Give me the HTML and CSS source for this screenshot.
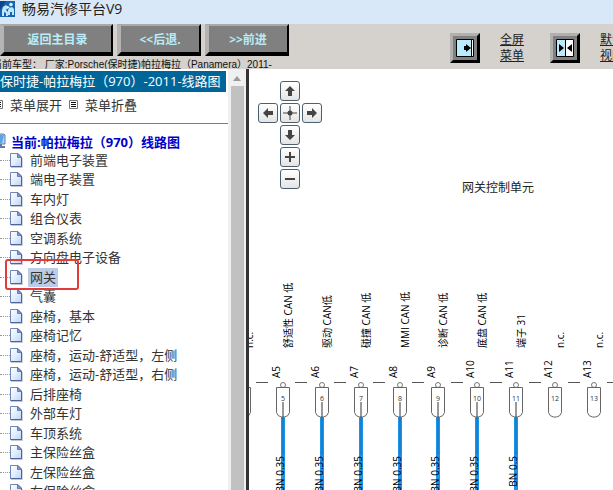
FILE: index.html
```html
<!doctype html>
<html lang="zh-CN">

<head>
  <meta charset="UTF-8" />
  <meta name="viewport" content="width=device-width, initial-scale=1.0" />
  <title>畅易汽修平台V9</title>
  <link rel="stylesheet" href="styles.css">
</head>

<body>
  <svg class="defs" aria-hidden="true">
    <defs>
      <linearGradient id="paper" x1="0" y1="0" x2="1" y2="1">
        <stop offset="0" stop-color="#ffffff" />
        <stop offset="0.5" stop-color="#e2eefd" />
        <stop offset="1" stop-color="#b9d4f6" />
      </linearGradient>
      <symbol id="page" viewBox="0 0 13 15">
        <path d="M1 14.2h11V5" fill="none" stroke="#c3c8d4" stroke-width="1.5" />
        <path d="M0.5 0.5h7.5l3.5 3.5v9.5h-11z" fill="url(#paper)" stroke="#7187b5" />
        <path d="M11.5 4v9.5h-11" fill="none" stroke="#4f6499" />
        <path d="M7.5 0.5v4h4z" fill="#8397c8" stroke="#566ca3" stroke-width="0.8" />
      </symbol>
      <symbol id="list" viewBox="0 0 9 9">
        <path d="M0.5 0.5h8v8h-8z" fill="#fff" stroke="#777" />
        <path d="M2 2.5h5M2 4.5h5M2 6.5h5" stroke="#111" />
      </symbol>
      <symbol id="socket" viewBox="0 0 16 36" overflow="visible">
        <circle cx="8" cy="3" r="2.5" fill="#fff" stroke="#555" stroke-width="0.8" />
        <path d="M1.5 5.5h13v25q-1 4-5 4.5h-3q-4-0.5-5-4.5z" fill="#fff" stroke="#666" />
      </symbol>
      <symbol id="wire" viewBox="0 0 8 400" overflow="visible">
        <path d="M4 31v369" stroke="#1a93e8" stroke-width="4" />
        <path d="M4 16v15" stroke="#333" stroke-width="1" />
        <path d="M4 31v38" stroke="#1670b8" stroke-width="1" />
      </symbol>
    </defs>
  </svg>

  <div class="app">
    <header class="titlebar">
      <svg class="logo" width="16" height="16" viewBox="0 0 16 16">
        <path d="M0 0h15v16H0z" fill="#1764ad" />
        <path d="M0 0h6l-6 9z" fill="#0d438d" />
        <path d="M3 6l3-2 2 2-2 3 2 2v4H6v-3l-2-1v4H2V9zM9 7l3-1 2 2v6h-2v-3h-2v3H8V9z" fill="#bfe5fa" />
        <circle cx="11" cy="3.5" r="1.8" fill="#d9f1fc" />
        <path d="M7 5l3 1-3 2z" fill="#fff" />
      </svg>
      <h1>畅易汽修平台V9</h1>
    </header>

    <div class="toolbar">
      <div class="toolbar-left">
        <div class="buttons">
          <button class="btn btn-wide">返回主目录</button>
          <button class="btn">&lt;&lt;后退.</button>
          <button class="btn">&gt;&gt;前进</button>
        </div>
        <p class="model">当前车型： 厂家:Porsche(保时捷)帕拉梅拉（Panamera）2011-</p>
      </div>
      <div class="tools">
        <button class="tool" aria-label="全屏菜单">
          <svg width="18" height="18" viewBox="0 0 18 18">
            <path d="M0.5 0.5h17v17h-17z" fill="#b9ecff" stroke="#000" />
            <path d="M15.5 1v16" stroke="#000" />
            <path d="M16 1h1v16h-1z" fill="#fff" />
            <path d="M8 7h2V5l5 4-5 4v-2H8z" fill="#000" />
          </svg>
        </button>
        <a class="tool-link" href="#">全屏菜单</a>
        <button class="tool" aria-label="默认视图">
          <svg width="18" height="18" viewBox="0 0 18 18">
            <path d="M0.5 0.5h17v17h-17z" fill="#fff" stroke="#000" />
            <path d="M1 1h8v16H1z" fill="#b9ecff" />
            <path d="M9.5 0v18" stroke="#000" />
            <path d="M3 5l5 4-5 4zM16 5l-5 4 5 4z" fill="#000" />
          </svg>
        </button>
        <a class="tool-link" href="#">默认视图</a>
      </div>
    </div>

    <main class="main">
      <aside class="side">
        <div class="side-content">
          <h2 class="side-title">保时捷-帕拉梅拉（970）-2011-线路图</h2>
          <div class="side-actions">
            <svg width="9" height="9"><use href="#list" /></svg>
            <a href="#">菜单展开</a>
            <svg width="9" height="9"><use href="#list" /></svg>
            <a href="#">菜单折叠</a>
          </div>
          <hr>
          <div class="current">
            <svg width="14" height="16" viewBox="0 0 14 16">
              <path d="M1 1h11l1 1v9H1z" fill="#b5d4f5" stroke="#5d7fb4" />
              <path d="M8 2l4 0-2 8H6z" fill="#5ca4e8" />
              <path d="M6 11h4v2h3v2H4v-2h2z" fill="#65799f" />
            </svg>
            <h3>当前:帕拉梅拉（970）线路图</h3>
          </div>
          <ul class="tree">
            <li><svg><use href="#page" /></svg><a href="#">前端电子装置</a></li>
            <li><svg><use href="#page" /></svg><a href="#">端电子装置</a></li>
            <li><svg><use href="#page" /></svg><a href="#">车内灯</a></li>
            <li><svg><use href="#page" /></svg><a href="#">组合仪表</a></li>
            <li><svg><use href="#page" /></svg><a href="#">空调系统</a></li>
            <li><svg><use href="#page" /></svg><a href="#">方向盘电子设备</a></li>
            <li class="marked"><svg><use href="#page" /></svg><a class="selected" href="#">网关</a></li>
            <li><svg><use href="#page" /></svg><a href="#">气囊</a></li>
            <li><svg><use href="#page" /></svg><a href="#">座椅，基本</a></li>
            <li><svg><use href="#page" /></svg><a href="#">座椅记忆</a></li>
            <li><svg><use href="#page" /></svg><a href="#">座椅，运动-舒适型，左侧</a></li>
            <li><svg><use href="#page" /></svg><a href="#">座椅，运动-舒适型，右侧</a></li>
            <li><svg><use href="#page" /></svg><a href="#">后排座椅</a></li>
            <li><svg><use href="#page" /></svg><a href="#">外部车灯</a></li>
            <li><svg><use href="#page" /></svg><a href="#">车顶系统</a></li>
            <li><svg><use href="#page" /></svg><a href="#">主保险丝盒</a></li>
            <li><svg><use href="#page" /></svg><a href="#">左保险丝盒</a></li>
            <li><svg><use href="#page" /></svg><a href="#">右保险丝盒</a></li>
          </ul>
        </div>
        <div class="scrollbar">
          <svg width="8" height="5" viewBox="0 0 8 5"><path d="M0 5l4-5 4 5z" fill="#9a9a9a" /></svg>
          <div class="thumb"></div>
        </div>
      </aside>

      <section class="diagram">
        <svg class="wiring">
          <text class="name" x="213" y="123">网关控制单元</text>

          <path d="M7 313.500h360" stroke="#555" stroke-dasharray="12 27" />

          <use href="#socket" x="-13" y="313" width="16" height="36" />
          <use href="#socket" x="26" y="313" width="16" height="36" />
          <use href="#socket" x="65" y="313" width="16" height="36" />
          <use href="#socket" x="104" y="313" width="16" height="36" />
          <use href="#socket" x="143" y="313" width="16" height="36" />
          <use href="#socket" x="181" y="313" width="16" height="36" />
          <use href="#socket" x="220" y="313" width="16" height="36" />
          <use href="#socket" x="259" y="313" width="16" height="36" />
          <use href="#socket" x="298" y="313" width="16" height="36" />
          <use href="#socket" x="337" y="313" width="16" height="36" />

          <use href="#wire" x="30" y="317" width="8" height="400" />
          <use href="#wire" x="69" y="317" width="8" height="400" />
          <use href="#wire" x="108" y="317" width="8" height="400" />
          <use href="#wire" x="147" y="317" width="8" height="400" />
          <use href="#wire" x="185" y="317" width="8" height="400" />
          <use href="#wire" x="224" y="317" width="8" height="400" />
          <use href="#wire" x="263" y="317" width="8" height="400" />

          <g class="pin">
            <text x="34" y="332">5</text>
            <text x="73" y="332">6</text>
            <text x="112" y="332">7</text>
            <text x="151" y="332">8</text>
            <text x="189" y="332">9</text>
            <text x="228" y="332">10</text>
            <text x="267" y="332">11</text>
            <text x="306" y="332">12</text>
            <text x="345" y="332">13</text>
          </g>

          <g class="label">
            <text transform="translate(4 279) rotate(-90)">n.c.</text>
            <text transform="translate(43 279) rotate(-90)">舒适性 CAN 低</text>
            <text transform="translate(82 279) rotate(-90)">驱动 CAN低</text>
            <text transform="translate(121 279) rotate(-90)">碰撞 CAN 低</text>
            <text transform="translate(160 279) rotate(-90)">MMI CAN 低</text>
            <text transform="translate(198 279) rotate(-90)">诊断 CAN 低</text>
            <text transform="translate(237 279) rotate(-90)">底盘 CAN 低</text>
            <text transform="translate(276 279) rotate(-90)">端子 31</text>
            <text transform="translate(315 279) rotate(-90)">n.c.</text>
            <text transform="translate(354 279) rotate(-90)">n.c.</text>
          </g>

          <g class="label">
            <text transform="translate(31 309) rotate(-90)">A5</text>
            <text transform="translate(70 309) rotate(-90)">A6</text>
            <text transform="translate(109 309) rotate(-90)">A7</text>
            <text transform="translate(148 309) rotate(-90)">A8</text>
            <text transform="translate(186 309) rotate(-90)">A9</text>
            <text transform="translate(225 309) rotate(-90)">A10</text>
            <text transform="translate(264 309) rotate(-90)">A11</text>
            <text transform="translate(303 309) rotate(-90)">A12</text>
            <text transform="translate(342 309) rotate(-90)">A13</text>
          </g>

          <g class="label wire-size">
            <text transform="translate(35 387) rotate(-90)">BN 0.35</text>
            <text transform="translate(74 387) rotate(-90)">BN 0.35</text>
            <text transform="translate(113 387) rotate(-90)">BN 0.35</text>
            <text transform="translate(152 387) rotate(-90)">BN 0.35</text>
            <text transform="translate(190 387) rotate(-90)">BN 0.35</text>
            <text transform="translate(229 387) rotate(-90)">BN 0.35</text>
            <text transform="translate(268 387) rotate(-90)">BN 0.5</text>
          </g>
        </svg>

        <div class="pan">
          <button class="pan-btn up" aria-label="上移"><svg viewBox="0 0 16 16"><path d="M8 3l5 5h-3v5H6V8H3z" /></svg></button>
          <button class="pan-btn left" aria-label="左移"><svg viewBox="0 0 16 16"><path d="M3 8l5-5v3h5v4H8v3z" /></svg></button>
          <button class="pan-btn center" aria-label="居中"><svg viewBox="0 0 16 16"><path d="M8 1v14M1 8h14" stroke="#444" /><circle cx="8" cy="8" r="2.500" /></svg></button>
          <button class="pan-btn right" aria-label="右移"><svg viewBox="0 0 16 16"><path d="M13 8l-5-5v3H3v4h5v3z" /></svg></button>
          <button class="pan-btn down" aria-label="下移"><svg viewBox="0 0 16 16"><path d="M8 13l5-5h-3V3H6v5H3z" /></svg></button>
          <button class="pan-btn plus" aria-label="放大"><svg viewBox="0 0 16 16"><path d="M7 3h2v4h4v2H9v4H7V9H3V7h4z" /></svg></button>
          <button class="pan-btn minus" aria-label="缩小"><svg viewBox="0 0 16 16"><path d="M3 7h10v2H3z" /></svg></button>
        </div>
      </section>
    </main>
  </div>
</body>

</html>
```
FILE: styles.css
```css
*,
*::before,
*::after {
  box-sizing: border-box;
}

body {
  margin: 0;
  font-family: "Open Sans", "Noto Sans CJK SC", sans-serif;
  font-size: 13px;
  color: #333333;
  background: #ffffff;
}

h1, h2, h3, p, ul {
  margin: 0;
  padding: 0;
}

a {
  color: inherit;
  text-decoration: none;
}

button {
  padding: 0;
  font-family: inherit;
}

.defs {
  position: absolute;
  width: 0;
  height: 0;
}

.app {
  display: flex;
  flex-direction: column;
  height: 100vh;
  overflow: hidden;
}

/* title bar */

.titlebar {
  display: flex;
  align-items: center;
  gap: 6px;
  flex: none;
  height: 24px;
  padding-bottom: 6px;
  background: #d9e8f8;
}

.titlebar h1 {
  font-size: 14px;
  font-weight: 400;
  line-height: 16px;
  color: #222222;
}

/* toolbar */

.toolbar {
  display: flex;
  flex: none;
  height: 45px;
  overflow: hidden;
  background: #d5d1cc;
}

.toolbar-left {
  flex: none;
  width: 290px;
  margin-right: 160px;
}

.buttons {
  display: flex;
  gap: 4px;
}

.btn {
  width: 84px;
  height: 32px;
  border-style: solid;
  border-width: 2px 2px 4px 4px;
  border-color: #a9a9a9 #000000 #000000 #b4b4b4;
  background: #808080;
  color: #b9ecf8;
  font-size: 12px;
  font-weight: 700;
}

.btn-wide {
  width: 113px;
}

.model {
  margin-left: -8px;
  font-family: "Liberation Sans", "Noto Sans CJK SC", sans-serif;
  font-size: 10px;
  line-height: 18px;
  white-space: nowrap;
  color: #111111;
}

.tools {
  display: flex;
  align-items: center;
  gap: 20px;
  flex: none;
  padding-top: 3px;
}

.tool {
  display: flex;
  align-items: center;
  justify-content: center;
  width: 30px;
  height: 30px;
  border: 3px solid;
  border-color: #b0b0b0 #000000 #000000 #b0b0b0;
  background: #808080;
}

.tool-link {
  width: 30px;
  font-size: 12px;
  line-height: 16px;
  text-decoration: underline;
  color: #222222;
}

/* side menu */

.main {
  display: flex;
  flex: 1;
  min-height: 0;
}

.side {
  display: flex;
  flex: none;
  overflow: hidden;
  border-right: 3px solid #333333;
}

.side-content {
  width: 228px;
  padding-top: 2px;
  overflow: hidden;
}

.side-title {
  width: 226px;
  height: 21px;
  background: #00669a;
  color: #ffffff;
  font-size: 13px;
  font-weight: 400;
  line-height: 21px;
  white-space: nowrap;
}

.side-actions {
  display: flex;
  align-items: center;
  gap: 7px;
  height: 31px;
  margin-left: -6px;
  padding-bottom: 6px;
}

.side hr {
  margin: 0;
  border: 0;
  border-top: 1px solid #808080;
}

.current {
  display: flex;
  align-items: center;
  gap: 5px;
  height: 26px;
  margin-left: -8px;
  padding-top: 8px;
  white-space: nowrap;
}

.current svg {
  flex: none;
}

.current h3 {
  font-size: 13px;
  color: #0000cc;
}

.tree {
  list-style: none;
}

.tree li {
  position: relative;
  display: flex;
  align-items: center;
  height: 20px;
}

.tree li:nth-child(even) {
  height: 19px;
}

.tree li::before {
  content: "";
  width: 10px;
  border-top: 1px dotted #999999;
}

.tree svg {
  width: 13px;
  height: 15px;
  margin-right: 5px;
}

.tree a {
  padding: 0 2px;
  line-height: 19px;
  white-space: nowrap;
}

.tree .selected {
  background: #bccbe6;
}

/* red frame over the marked item */
.tree .marked::after {
  content: "";
  position: absolute;
  left: 5px;
  top: -8px;
  width: 74px;
  height: 31px;
  border: 2px solid #e23b3b;
  border-radius: 3px;
  z-index: 1;
}

.scrollbar {
  display: flex;
  flex-direction: column;
  align-items: center;
  gap: 5px;
  width: 18px;
  padding-top: 7px;
  background: #f0f0f0;
}

.thumb {
  flex: 1;
  width: 13px;
  background: #c1c1c1;
}

/* wiring diagram */

.diagram {
  position: relative;
  flex: 1;
  min-width: 0;
  overflow: hidden;
}

.wiring {
  display: block;
  width: 100%;
  height: 100%;
}

.name {
  font-size: 12px;
  fill: #222222;
}

.label {
  font-size: 10px;
  fill: #000000;
}

.wire-size {
  text-anchor: end;
}

.pin {
  font-size: 7px;
  text-anchor: middle;
  fill: #333333;
}

.pan {
  position: absolute;
  left: 9px;
  top: 12px;
  display: grid;
  grid-template-columns: repeat(3, 20px);
  grid-template-areas:
    ". up ."
    "left center right"
    ". down ."
    ". plus ."
    ". minus .";
  gap: 2px;
}

.pan-btn {
  display: block;
  width: 20px;
  height: 20px;
  border: 1px solid #4c5f70;
  border-radius: 3px;
  background: linear-gradient(#ffffff, #e4e4e4);
}

.pan-btn svg {
  display: block;
  width: 16px;
  height: 16px;
  margin: 0 auto;
  fill: #444444;
}

.up { grid-area: up; }
.left { grid-area: left; }
.center { grid-area: center; }
.right { grid-area: right; }
.down { grid-area: down; }
.plus { grid-area: plus; }
.minus { grid-area: minus; }
```
